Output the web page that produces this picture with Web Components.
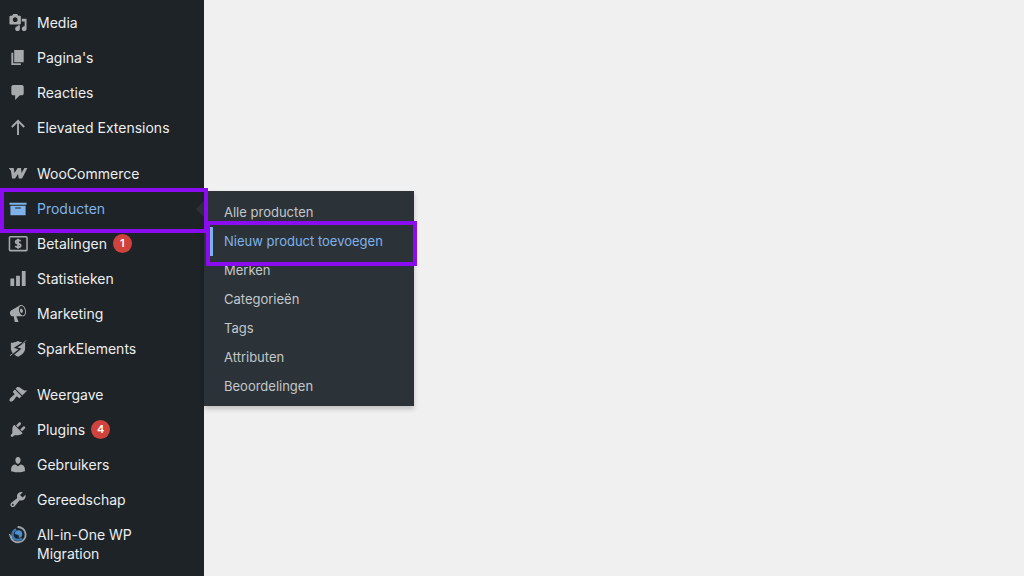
<!DOCTYPE html>
<html lang="nl">
<head>
<meta charset="utf-8">
<meta name="viewport" content="width=device-width, initial-scale=1">
<title>Producten – beheer</title>
<style>
  body {
    margin: 0;
    background: #f0f0f0;
    font-family: Inter, "Liberation Sans", sans-serif;
    font-size: 14px;
    line-height: 19px;
  }
</style>
</head>
<body>
<admin-shell>
  <admin-menu slot="menu" label="Hoofdmenu">
    <menu-group>
      <menu-entry icon="media">Media</menu-entry>
      <menu-entry icon="pages">Pagina's</menu-entry>
      <menu-entry icon="comments">Reacties</menu-entry>
      <menu-entry icon="arrow">Elevated Extensions</menu-entry>
    </menu-group>
    <menu-group>
      <menu-entry icon="woo">WooCommerce</menu-entry>
      <menu-entry icon="archive" open>Producten
        <menu-flyout slot="flyout">
          <flyout-link>Alle producten</flyout-link>
          <flyout-link current>Nieuw product toevoegen</flyout-link>
          <flyout-link>Merken</flyout-link>
          <flyout-link>Categorieën</flyout-link>
          <flyout-link>Tags</flyout-link>
          <flyout-link>Attributen</flyout-link>
          <flyout-link>Beoordelingen</flyout-link>
        </menu-flyout>
      </menu-entry>
      <menu-entry icon="payments">Betalingen<count-badge slot="badge">1</count-badge></menu-entry>
      <menu-entry icon="chart">Statistieken</menu-entry>
      <menu-entry icon="megaphone">Marketing</menu-entry>
      <menu-entry icon="spark">SparkElements</menu-entry>
    </menu-group>
    <menu-group>
      <menu-entry icon="brush">Weergave</menu-entry>
      <menu-entry icon="plug">Plugins<count-badge slot="badge">4</count-badge></menu-entry>
      <menu-entry icon="user">Gebruikers</menu-entry>
      <menu-entry icon="wrench">Gereedschap</menu-entry>
      <menu-entry icon="migrate">All-in-One WP Migration</menu-entry>
    </menu-group>
  </admin-menu>
</admin-shell>

<script>
const ICONS = {
  media: '<path d="M13 11V4c0-.55-.45-1-1-1h-1.67L9 1H5L3.67 3H2c-.55 0-1 .45-1 1v7c0 .55.45 1 1 1h10c.55 0 1-.45 1-1zM7 4.5c1.38 0 2.5 1.12 2.5 2.5S8.38 9.5 7 9.5 4.5 8.38 4.5 7 5.62 4.5 7 4.5zM14 6h5v10.5c0 1.38-1.12 2.5-2.5 2.5S14 17.88 14 16.5s1.12-2.5 2.5-2.5c.17 0 .34.02.5.05V9h-3V6zm-4 8.05V13h2v3.5c0 1.38-1.12 2.5-2.5 2.5S7 17.88 7 16.5 8.12 14 9.5 14c.17 0 .34.02.5.05z"/>',
  pages: '<path d="M6 15V2h10v13H6zm-1 1h8v2H3V5h2v11z"/>',
  comments: '<path d="M5 2h9c1.1 0 2 .9 2 2v7c0 1.1-.9 2-2 2h-2l-5 5v-5H5c-1.1 0-2-.9-2-2V4c0-1.1.9-2 2-2z"/>',
  arrow: '<path d="M10 18V3.5M3.5 9.5 10 3l6.500 6.500" fill="none" stroke="currentColor" stroke-width="2"/>',
  woo: '<path d="M.3 4.300h5.200L6.300 9.600 9.600 4.300h3.600l.6 5.200 2.900-5.200h3.200l-5.600 10.900h-3.500l-.8-4.700-3 4.700H3.800L2.500 7z"/>',
  archive: '<path d="M19 4v2H1V4h18zM2 7h16v10H2V7zm11 3V9H7v1h6z"/>',
  payments: '<rect x="1" y="3" width="18.500" height="14.500" rx="1" fill="none" stroke="currentColor" stroke-width="1.600"/><path d="M12.700 7.800c-.5-1-1.500-1.300-2.600-1.300-1.500 0-2.500.7-2.500 1.800 0 2.600 5.200 1.200 5.200 3.800 0 1.100-1.100 1.900-2.700 1.900-1.400 0-2.400-.5-2.900-1.500M10.100 5v10.500" fill="none" stroke="currentColor" stroke-width="1.900"/>',
  chart: '<path d="M18 18V2h-4v16h4zm-6 0V7H8v11h4zm-6 0v-8H2v8h4z"/>',
  megaphone: '<path d="M18.150 5.940c.46 1.620.38 3.220-.02 4.480-.42 1.280-1.260 2.180-2.300 2.480-.16.06-.26.06-.4.06-.06.02-.12.02-.18.02-.06.02-.14.02-.22.02h-6.800l2.220 5.500c.02.14-.06.26-.14.34-.08.1-.24.16-.34.16H6.950c-.1 0-.26-.06-.34-.16-.08-.08-.16-.2-.14-.34l-1-5.500H4.250l-.02-.02c-.5.06-1.080-.18-1.540-.62s-.88-1.080-1.060-1.880c-.24-.8-.2-1.560-.02-2.200.18-.62.58-1.080 1.060-1.300l.02-.02 9-5.400c.1-.06.18-.1.24-.16.06-.04.14-.08.24-.12.16-.08.28-.12.5-.18 1.040-.3 2.240.1 3.220.98s1.840 2.240 2.260 3.860zm-2.580 5.980h-.02c.4-.1.74-.34 1.040-.7.58-.7.86-1.760.86-3.040 0-.64-.1-1.300-.28-1.980-.34-1.360-1.020-2.500-1.780-3.240s-1.680-1.100-2.460-.88c-.82.22-1.400.96-1.700 2-.32 1.040-.28 2.360.06 3.720.38 1.360 1 2.500 1.800 3.240.78.74 1.620 1.100 2.480.88zm-2.540-7.080c.22-.04.42-.02.62.04.38.16.76.48 1.020 1s.42 1.200.42 1.780c0 .3-.04.56-.12.8-.18.48-.44.84-.86.94-.34.1-.8-.06-1.140-.4s-.64-.86-.78-1.500c-.18-.62-.12-1.240.02-1.720s.48-.84.82-.94z"/>',
  spark: '<path d="M10 2c2.500 1.300 4.800 1.800 7.500 2v5.500c0 4-2.800 7.200-7.500 9.200-4.700-2-7.500-5.200-7.500-9.200V4C5.200 3.800 7.500 3.300 10 2z"/><path d="M19.500 1.500 7.500 9l4.500 1.500L1 19.500" fill="none" stroke="#1d2327" stroke-width="1.600"/><path d="M18.500 1.500 14 6M1.500 17.800l3-2.600" fill="none" stroke="currentColor" stroke-width="1"/>',
  brush: '<path d="M14.480 11.060L7.410 3.990l1.500-1.500c.5-.56 2.300-.47 3.510.32 1.210.8 1.430 1.280 2.910 2.100 1.180.64 2.450 1.260 4.450.85zm-.71.71L6.700 4.700 4.930 6.470c-.39.39-.39 1.020 0 1.410l1.060 1.060c.39.39.39 1.030 0 1.420-.6.6-1.430 1.110-2.210 1.690-.35.26-.7.53-1.010.84C1.430 14.230.4 16.080 1.400 17.070c.99 1 2.840-.03 4.180-1.360.31-.31.58-.66.85-1.020.57-.78 1.080-1.610 1.690-2.210.39-.39 1.020-.39 1.410 0l1.060 1.060c.39.39 1.020.39 1.410 0z"/>',
  plug: '<path d="M13.110 4.360L9.870 7.600 8 5.730l3.240-3.240c.35-.34 1.050-.2 1.560.32.52.51.66 1.210.31 1.550zm-8 1.770l.91-1.120 9.010 9.010-1.190.84c-.71.71-2.630 1.160-3.820 1.160H6.140L4.900 17.260c-.59.59-1.540.59-2.120 0-.59-.58-.59-1.530 0-2.120l1.240-1.240v-3.880c0-1.130.4-3.190 1.090-3.890zm7.260 3.970l3.240-3.240c.34-.35 1.040-.21 1.550.31.52.51.66 1.210.31 1.550l-3.240 3.250z"/>',
  user: '<path d="M10 9.250c-2.270 0-2.730-3.440-2.730-3.440C7 4.020 7.820 2 9.970 2c2.160 0 2.980 2.020 2.710 3.810 0 0-.41 3.440-2.680 3.440zm0 2.570L12.720 10c2.390 0 4.520 2.330 4.520 4.530v2.490s-3.650 1.130-7.240 1.130c-3.650 0-7.240-1.130-7.240-1.130v-2.490c0-2.250 1.940-4.480 4.470-4.480z"/>',
  wrench: '<path d="M16.680 9.770c-1.340 1.340-3.300 1.670-4.950.99l-5.410 6.520c-.99.99-2.590.99-3.580 0s-.99-2.590 0-3.570l6.520-5.420c-.68-1.650-.35-3.610.99-4.950 1.280-1.280 3.120-1.620 4.720-1.060l-2.890 2.890 2.820 2.820 2.860-2.870c.53 1.580.18 3.390-1.080 4.650zM3.810 16.210c.4.39 1.040.39 1.430 0 .4-.4.4-1.040 0-1.430-.39-.4-1.030-.4-1.430 0-.39.39-.39 1.030 0 1.430z"/>',
  migrate: '<g fill="none"><path d="M9.500 2.200a8 8 0 1 1-7.300 9.600" stroke="#9ba3aa" stroke-width="2"/><path d="M1 9.500 2.300 12.500 5 11" stroke="#9ba3aa" stroke-width="1.500"/><path d="M8 4.600a5.700 5.700 0 0 0-3 8.400 5.700 5.700 0 0 0 9 1" stroke="#3a79b5" stroke-width="2.400"/></g><path d="M6.500 9.500a4 4 0 1 1 4 4c1-1.500.5-3-1-3.200z" fill="#4a90d0"/>'
};

function define(name, markup, setup) {
  const template = document.createElement('template');
  template.innerHTML = markup;
  customElements.define(name, class extends HTMLElement {
    connectedCallback() {
      if (this.shadowRoot) return;
      this.attachShadow({ mode: 'open' }).append(template.content.cloneNode(true));
      if (setup) setup(this, this.shadowRoot);
    }
  });
}

define('admin-shell', `
  <style>
    :host { display: flex; min-height: 100vh; }
    main { flex: 1; }
  </style>
  <slot name="menu"></slot>
  <main></main>`);

define('admin-menu', `
  <style>
    :host { display: block; flex: 0 0 204px; background: #1d2327; }
    nav { display: flex; flex-direction: column; gap: 11px; padding: 5px 0; }
  </style>
  <nav><slot></slot></nav>`,
  (host, root) => root.querySelector('nav').setAttribute('aria-label', host.getAttribute('label')));

define('menu-group', `
  <style>
    :host { display: block; }
    div { display: flex; flex-direction: column; }
  </style>
  <div role="list"><slot></slot></div>`);

define('menu-icon', `
  <style>
    :host { display: block; width: 20px; height: 20px; }
    svg { display: block; width: 100%; height: 100%; fill: currentColor; }
  </style>
  <svg viewBox="0 0 20 20" aria-hidden="true"></svg>`,
  (host, root) => { root.querySelector('svg').innerHTML = ICONS[host.getAttribute('name')]; });

define('count-badge', `
  <style>
    :host {
      display: grid; place-items: center; width: 19px; height: 19px;
      border-radius: 50%; background: #d0433c; color: #fff;
      font-size: 11px; font-weight: 600;
    }
  </style>
  <slot></slot>`);

define('focus-frame', `
  <style>
    :host { position: absolute; z-index: 2; border: 4px solid #8b0cf0; pointer-events: none; }
  </style>`);

define('menu-entry', `
  <style>
    :host { display: block; position: relative; color: #eceef0; }
    a {
      display: flex; align-items: flex-start; gap: 9px;
      padding: 8px; color: inherit; text-decoration: none;
    }
    menu-icon { flex: none; height: 19px; color: #a7aaad; }
    .text { display: flex; gap: 6px; }
    :host([open]) a, :host([open]) menu-icon { color: #7fb2ea; }
    :host([open]) a::after {
      content: ""; position: absolute; right: 0; top: 10px;
      border: 8px solid transparent; border-left: 0; border-right-color: #2c3338;
    }
    focus-frame { display: none; inset: -3px -4px -7px 0; }
    :host([open]) focus-frame { display: block; }
  </style>
  <a href="#"><menu-icon></menu-icon><span class="text"><span><slot></slot></span><slot name="badge"></slot></span></a>
  <slot name="flyout"></slot>
  <focus-frame></focus-frame>`,
  (host, root) => {
    host.setAttribute('role', 'listitem');
    const icon = document.createElement('menu-icon');
    icon.setAttribute('name', host.getAttribute('icon'));
    root.querySelector('menu-icon').replaceWith(icon);
  });

define('menu-flyout', `
  <style>
    :host {
      display: block; position: absolute; z-index: 1; left: 100%; top: 0; width: 210px;
      background: #2c3338; box-shadow: 0 3px 5px rgba(0, 0, 0, .2);
    }
    div { padding: 7px 0 5px; }
  </style>
  <div role="list"><slot></slot></div>`);

define('flyout-link', `
  <style>
    :host { display: block; position: relative; color: #c3c7ca; font-size: 13px; }
    a {
      display: block; margin-left: 6px; padding: 5px 11px;
      border-left: 3px solid transparent; color: inherit; text-decoration: none;
    }
    :host([current]) a { color: #7fb2ea; border-color: #7fb2ea; }
    focus-frame { display: none; inset: -6px -3px -10px 2px; }
    :host([current]) focus-frame { display: block; }
  </style>
  <a href="#"><slot></slot></a>
  <focus-frame></focus-frame>`,
  host => host.setAttribute('role', 'listitem'));
</script>
</body>
</html>
